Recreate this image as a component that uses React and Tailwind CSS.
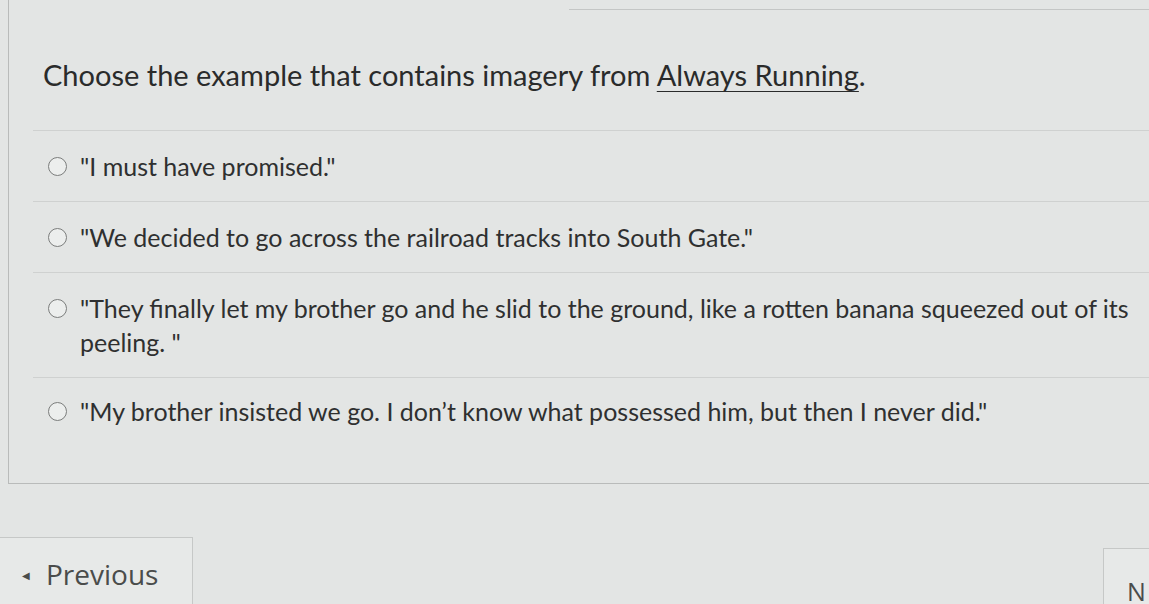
import React from 'react';

const options = [
  '"I must have promised."',
  '"We decided to go across the railroad tracks into South Gate."',
  '"They finally let my brother go and he slid to the ground, like a rotten banana squeezed out of its peeling. "',
  '"My brother insisted we go. I don\u2019t know what possessed him, but then I never did."',
];

const Radio = () => (
  <span className="mt-[8px] h-[19px] w-[19px] shrink-0 rounded-full border-[1.5px] border-[#7b7d7c] bg-[#eceeed]" />
);

export default function App() {
  return (
    <div
      className="h-[604px] w-[1149px] overflow-hidden bg-[#e3e5e4] text-[#2f3030]"
      style={{ fontFamily: 'Lato, "Open Sans", sans-serif' }}
    >
      {/* question card */}
      <div className="ml-[8px] flex h-[484px] flex-col border-b-[1.5px] border-l-[1.5px] border-[#b9bbba]">
        <div className="flex h-[10px]">
          <div className="w-[560px]" />
          <div className="flex-1 border-b border-[#c4c6c5]" />
        </div>

        <h1 className="ml-[34px] mt-[48px] text-[29px] leading-[34px] text-[#2a2b2b]">
          Choose the example that contains imagery from{' '}
          <span className="underline decoration-1 underline-offset-[5px]">Always Running</span>.
        </h1>

        <div className="ml-[24px] mt-[38px] border-t border-[#cfd1d0]">
          {options.map((text, idx) => (
            <div
              key={idx}
              className={`flex gap-[13px] pl-[15px] pr-[10px] ${
                idx < options.length - 1 ? 'border-b border-[#cfd1d0] py-[18px]' : 'py-[16px]'
              }`}
            >
              <Radio />
              <p className="text-[25px] leading-[34px]">{text}</p>
            </div>
          ))}
        </div>
      </div>

      {/* navigation */}
      <div className="mt-[53px] flex items-start justify-between">
        <button
          className="flex h-[80px] w-[193px] items-start gap-[16px] border border-l-0 border-[#c6c8c7] bg-[#e7e9e8] pl-[22px] pt-[18px] text-[#4a4c4b]"
          style={{ fontFamily: '"Open Sans", sans-serif' }}
        >
          <span className="mt-[14px] text-[10px] leading-none">◀</span>
          <span className="text-[28px] leading-[36px]">Previous</span>
        </button>
        <button
          className="mt-[11px] h-[70px] w-[46px] border border-r-0 border-[#c6c8c7] bg-[#e7e9e8] pl-[23px] pt-[16px] text-left text-[25px] leading-[32px] text-[#4a4c4b]"
          style={{ fontFamily: '"Open Sans", sans-serif' }}
        >
          N
        </button>
      </div>
    </div>
  );
}
